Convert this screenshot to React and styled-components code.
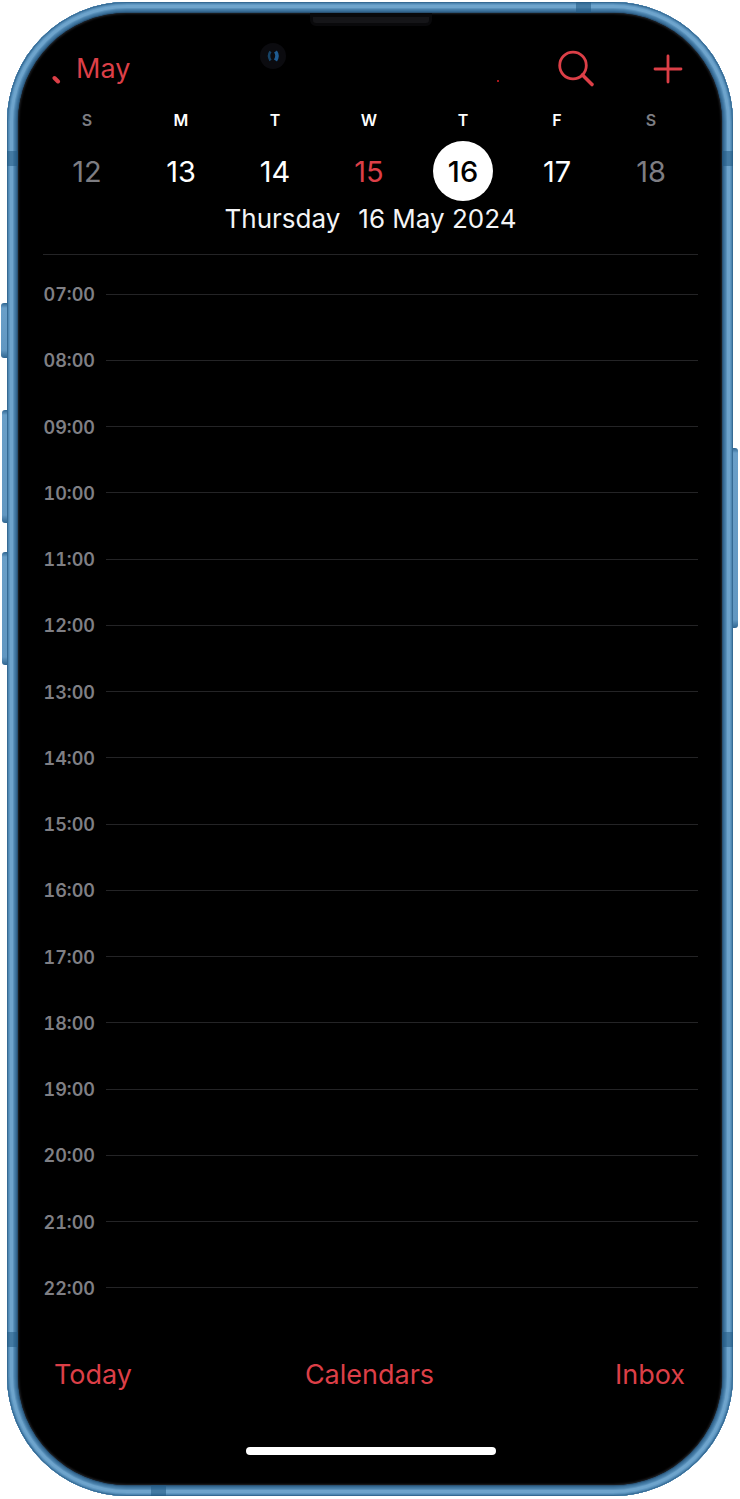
import React from "react";
import styled, { createGlobalStyle } from "styled-components";

const GlobalStyle = createGlobalStyle`
  *, *::before, *::after { box-sizing: border-box; }
  body {
    margin: 0;
    background: #fff;
    font-family: Inter, "Liberation Sans", sans-serif;
  }
  button { font: inherit; color: inherit; background: none; border: 0; padding: 0; cursor: pointer; }
`;

const red = "#dc3f47";

const Stage = styled.div`
  padding: 2px 7px 3px;
  overflow: hidden;
`;

const Phone = styled.div`
  position: relative;
  padding: 11px;
  border-radius: 120px;
  background: #2a5273;
  box-shadow:
    inset 0 0 0 1px #356a94,
    inset 0 0 0 2px #4f87b1,
    inset 0 0 0 3px #5f97c2,
    inset 0 0 0 6px #6ea4cc,
    inset 0 0 0 7px #5a91bb,
    inset 0 0 0 8px #4a80aa,
    inset 0 0 0 9px #3f759f,
    inset 0 0 0 10px #346790;
`;

const SideButton = styled.span`
  position: absolute;
  top: ${(p) => p.$top}px;
  ${(p) => p.$side}: -${(p) => p.$depth}px;
  width: ${(p) => p.$depth}px;
  height: ${(p) => p.$length}px;
  background: linear-gradient(#2f6590, #6a9fc8 5px, #6197c1 calc(100% - 8px), #2f6590);
  border-radius: ${(p) => (p.$side === "left" ? "3px 0 0 3px" : "0 3px 3px 0")};
`;

const Band = styled.span`
  position: absolute;
  background: rgba(32, 88, 130, 0.55);
  ${(p) => (p.$edge === "left" || p.$edge === "right" ? "width: 11px; height: 15px;" : "width: 15px; height: 11px;")}
  ${(p) => p.$edge}: 0;
  ${(p) => p.$from}: ${(p) => p.$at}px;
`;

const Screen = styled.main`
  position: relative;
  display: flex;
  flex-direction: column;
  padding: 33px 24px 30px 25px;
  border-radius: 109px;
  background: #000;
  box-shadow: inset 0 0 2px 1px #202226;
`;

const Speaker = styled.span`
  position: absolute;
  top: 0;
  left: 50%;
  width: 122px;
  height: 13px;
  margin-left: -60px;
  border: 3px solid #09090b;
  border-top-width: 4px;
  border-radius: 0 0 6px 6px;
  background: #151518;
`;

const Camera = styled.svg`
  position: absolute;
  top: 30px;
  left: 50%;
  margin-left: -111px;
`;

const Glint = styled.span`
  position: absolute;
  top: 67px;
  left: 50%;
  width: 2px;
  height: 2px;
  margin-left: 127px;
  background: #a5161b;
`;

const Header = styled.header`
  display: flex;
  align-items: center;
  height: 46px;
  padding: 0 15px 0 9px;
  color: ${red};
`;

const BackButton = styled.button`
  display: flex;
  align-items: center;
  gap: 14px;
  margin-right: auto;
  && { font-size: 27px; line-height: 34px; }
`;

const IconButton = styled.button`
  display: flex;
  & + & { margin-left: 58px; }
`;

const Week = styled.div`
  display: grid;
  grid-template-columns: repeat(7, 1fr);
  margin: 19px 0 0 -3px;
`;

const Day = styled.div`
  display: flex;
  flex-direction: column;
  align-items: center;
  gap: 12px;
  color: ${(p) => (p.$weekend ? "#7d7d82" : "#fff")};
`;

const Weekday = styled.span`
  font-size: 16px;
  font-weight: 600;
  line-height: 18px;
`;

const DateButton = styled.button`
  width: 60px;
  height: 60px;
  border-radius: 50%;
  && {
    font-size: 29px;
    font-weight: ${(p) => (p.$selected ? 500 : 400)};
    color: ${(p) => (p.$selected ? "#000" : p.$today ? red : "inherit")};
    background: ${(p) => (p.$selected ? "#fff" : "none")};
  }
`;

const DateTitle = styled.h1`
  display: flex;
  justify-content: center;
  gap: 18px;
  margin: 0 0 17px;
  font-size: 26px;
  font-weight: 400;
  line-height: 36px;
  color: #f4f4f6;
`;

const Divider = styled.div`
  height: 1px;
  background: #242426;
`;

const Timeline = styled.ol`
  display: grid;
  grid-auto-rows: 1fr;
  min-height: 1060px;
  margin: 6px 0 0;
  padding: 0;
  list-style: none;
`;

const Hour = styled.li`
  display: flex;
  align-items: center;
  gap: 11px;
  &::after {
    content: "";
    flex: 1;
    height: 1px;
    background: #242426;
  }
`;

const HourLabel = styled.time`
  display: flex;
  justify-content: flex-end;
  width: 52px;
  padding-top: 2px;
  font-size: 18px;
  font-weight: 600;
  font-variant-numeric: tabular-nums;
  line-height: 24px;
  color: #7f7f84;
`;

const Toolbar = styled.footer`
  display: grid;
  grid-template-columns: 1fr auto 1fr;
  align-items: center;
  height: 48px;
  margin-top: 30px;
  padding: 0 13px 0 11px;
  color: ${red};
`;

const ToolButton = styled.button`
  justify-self: ${(p) => p.$align};
  && { font-size: 27px; line-height: 34px; }
`;

const HomeBar = styled.div`
  width: 250px;
  height: 8px;
  margin: 48px auto 0;
  border-radius: 4px;
  background: #fff;
`;

const week = [
  ["S", 12], ["M", 13], ["T", 14], ["W", 15], ["T", 16], ["F", 17], ["S", 18],
];
const hours = Array.from({ length: 16 }, (_, i) => `${String(i + 7).padStart(2, "0")}:00`);

export default function App() {
  return (
    <Stage>
      <GlobalStyle />
      <Phone>
        <SideButton $side="left" $top={301} $length={55} $depth={6} />
        <SideButton $side="left" $top={408} $length={113} $depth={5} />
        <SideButton $side="left" $top={550} $length={113} $depth={5} />
        <SideButton $side="right" $top={446} $length={180} $depth={5} />
        <Band $edge="left" $from="top" $at={149} />
        <Band $edge="right" $from="top" $at={149} />
        <Band $edge="left" $from="bottom" $at={149} />
        <Band $edge="right" $from="bottom" $at={149} />
        <Band $edge="top" $from="right" $at={142} />
        <Band $edge="bottom" $from="left" $at={144} />
        <Screen>
          <Speaker />
          <Camera width="28" height="28" viewBox="0 0 28 28" aria-hidden="true">
            <circle cx="14" cy="13" r="13" fill="#0b0b0f" />
            <path d="M11.500 8.500q-3 4 0 9" fill="none" stroke="#174467" strokeWidth="2.500" />
            <path d="M16.500 8.500q3 4 0 9" fill="none" stroke="#1f5c92" strokeWidth="3.500" />
          </Camera>
          <Glint />
          <Header>
            <BackButton>
              <svg width="10" height="32" viewBox="0 0 10 32" aria-hidden="true">
                <path d="M2.500 25l3.500 3.500" stroke={red} strokeWidth="4" strokeLinecap="round" />
              </svg>
              May
            </BackButton>
            <IconButton aria-label="Search">
              <svg width="38" height="38" viewBox="0 0 38 38" fill="none" stroke={red} aria-hidden="true">
                <circle cx="16" cy="15.500" r="13.300" strokeWidth="2.800" />
                <path d="M25.500 25l9.500 9.500" strokeWidth="3.600" strokeLinecap="round" />
              </svg>
            </IconButton>
            <IconButton aria-label="Add event">
              <svg width="30" height="30" viewBox="0 0 30 30" fill="none" stroke={red} aria-hidden="true">
                <path d="M15 2v26M2 15h26" strokeWidth="2.800" strokeLinecap="round" />
              </svg>
            </IconButton>
          </Header>
          <Week>
            {week.map(([letter, date]) => (
              <Day key={date} $weekend={letter === "S"}>
                <Weekday>{letter}</Weekday>
                <DateButton $today={date === 15} $selected={date === 16}>{date}</DateButton>
              </Day>
            ))}
          </Week>
          <DateTitle>
            <span>Thursday</span>
            <span>16 May 2024</span>
          </DateTitle>
          <Divider />
          <Timeline>
            {hours.map((hour) => (
              <Hour key={hour}>
                <HourLabel>{hour}</HourLabel>
              </Hour>
            ))}
          </Timeline>
          <Toolbar>
            <ToolButton $align="start">Today</ToolButton>
            <ToolButton $align="center">Calendars</ToolButton>
            <ToolButton $align="end">Inbox</ToolButton>
          </Toolbar>
          <HomeBar />
        </Screen>
      </Phone>
    </Stage>
  );
}
